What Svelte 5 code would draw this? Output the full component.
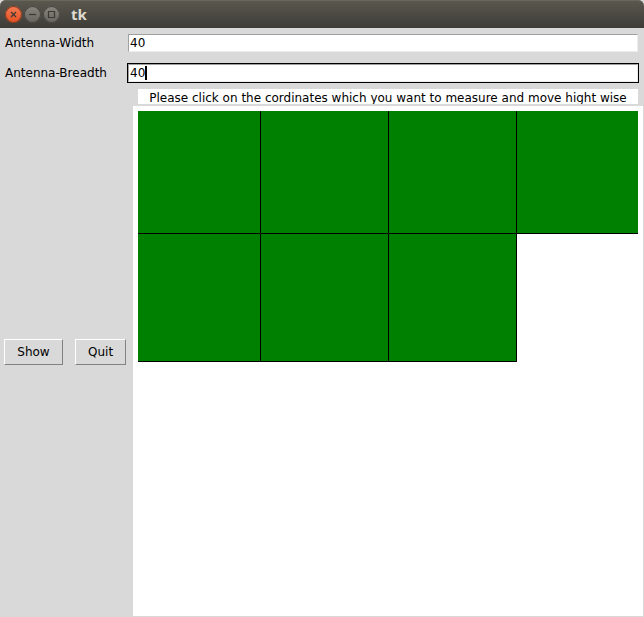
<script>
  let width = $state('40');
  let breadth = $state('40');
  let measured = $state([0, 1, 2, 3, 4, 5, 6]);
</script>

<div class="window">
  <header>
    <button class="control close" aria-label="Close">
      <svg viewBox="0 0 17 17" width="17" height="17"><path d="M6 6l5 5M11 6l-5 5" /></svg>
    </button>
    <button class="control" aria-label="Minimize">
      <svg viewBox="0 0 17 17" width="17" height="17"><path d="M5 8.5h7" /></svg>
    </button>
    <button class="control" aria-label="Maximize">
      <svg viewBox="0 0 17 17" width="17" height="17"><path d="M5.5 5.5h6v6h-6z" /></svg>
    </button>
    <h1>tk</h1>
  </header>

  <form class="fields" onsubmit={(e) => e.preventDefault()}>
    <label for="width">Antenna-Width</label>
    <div class="entry"><input id="width" type="text" bind:value={width} /></div>
    <label for="breadth">Antenna-Breadth</label>
    <div class="entry active">
      <input id="breadth" type="text" bind:value={breadth} />
      <span class="caret"></span>
    </div>
  </form>

  <main>
    <div class="actions">
      <button class="action">Show</button>
      <button class="action">Quit</button>
    </div>
    <section>
      <p>Please click on the cordinates which you want to measure and move hight wise</p>
      <div class="canvas">
        <div class="cells">
          {#each measured as cell (cell)}
            <button class="cell" aria-label={`Cell ${cell + 1}`}></button>
          {/each}
        </div>
      </div>
    </section>
  </main>
</div>

<style>
  :global(body) {
    margin: 0;
    background: #d9d9d9;
  }
  .window {
    display: flex;
    flex-direction: column;
    min-height: 100vh;
    box-sizing: border-box;
    background: #d9d9d9;
    color: #000;
    font: 12px/14px "DejaVu Sans", sans-serif;
  }
  header {
    display: flex;
    align-items: center;
    gap: 2px;
    height: 28px;
    padding: 0 5px;
    box-sizing: border-box;
    border-radius: 6px 6px 0 0;
    background: linear-gradient(#5b584f, #3d3c37);
    box-shadow: inset 0 1px #69665c;
  }
  .control {
    width: 17px;
    height: 17px;
    padding: 0;
    border: 0;
    border-radius: 50%;
    background: linear-gradient(#88867e, #66645e);
    box-shadow: 0 0 0 1px #45433d inset;
  }
  .control.close {
    background: linear-gradient(#f47b56, #e2501f);
    box-shadow: 0 0 0 1px #7a3c25 inset;
  }
  svg {
    display: block;
    fill: none;
    stroke: #3b3933;
    stroke-width: 1.2;
  }
  h1 {
    margin: 0 0 0 9px;
    color: #dfdbd2;
    font: bold 15px/20px "Open Sans", sans-serif;
  }
  .fields {
    display: grid;
    grid-template-columns: 122px 1fr;
    grid-auto-rows: 30px;
    align-items: center;
    padding: 0 5px;
  }
  .entry {
    position: relative;
    display: flex;
    border: 1px solid transparent;
  }
  .entry.active {
    border-color: #000;
  }
  input {
    flex: 1;
    min-width: 0;
    height: 18px;
    box-sizing: border-box;
    padding: 0 1px;
    border: 1px solid;
    border-color: #a0a0a0 #ececec #ececec #a0a0a0;
    border-radius: 0;
    outline: 0;
    background: #fff;
    color: #000;
    font: inherit;
    caret-color: transparent;
  }
  .caret {
    position: absolute;
    left: 17px;
    top: 2px;
    width: 2px;
    height: 14px;
    background: #000;
  }
  main {
    flex: 1;
    display: grid;
    grid-template-columns: 133px 1fr;
    padding: 0 1px 1px 0;
  }
  .actions {
    display: flex;
    align-items: center;
    gap: 12px;
    padding: 0 4px;
  }
  .action {
    height: 26px;
    padding: 0 12px;
    border: 1px solid;
    border-color: #fff #828282 #828282 #fff;
    border-radius: 0;
    background: #d9d9d9;
    color: #000;
    font: inherit;
  }
  .action:first-child {
    min-width: 59px;
  }
  section {
    display: flex;
    flex-direction: column;
    min-width: 0;
  }
  p {
    height: 15px;
    margin: 1px 5px 2px;
    overflow: hidden;
    background: #fff;
    line-height: 18px;
    text-align: center;
    white-space: nowrap;
  }
  .canvas {
    flex: 1;
    padding: 5px;
    background: #fff;
  }
  .cells {
    display: grid;
    grid-template-columns: 123fr 128fr 128fr 121fr;
    grid-template-rows: 123px 128px;
  }
  .cell {
    padding: 0;
    border: 0 solid #000;
    border-width: 0 1px 1px 0;
    border-radius: 0;
    background: #008000;
  }
  .cell:nth-child(4n) {
    border-right-width: 0;
  }
</style>
